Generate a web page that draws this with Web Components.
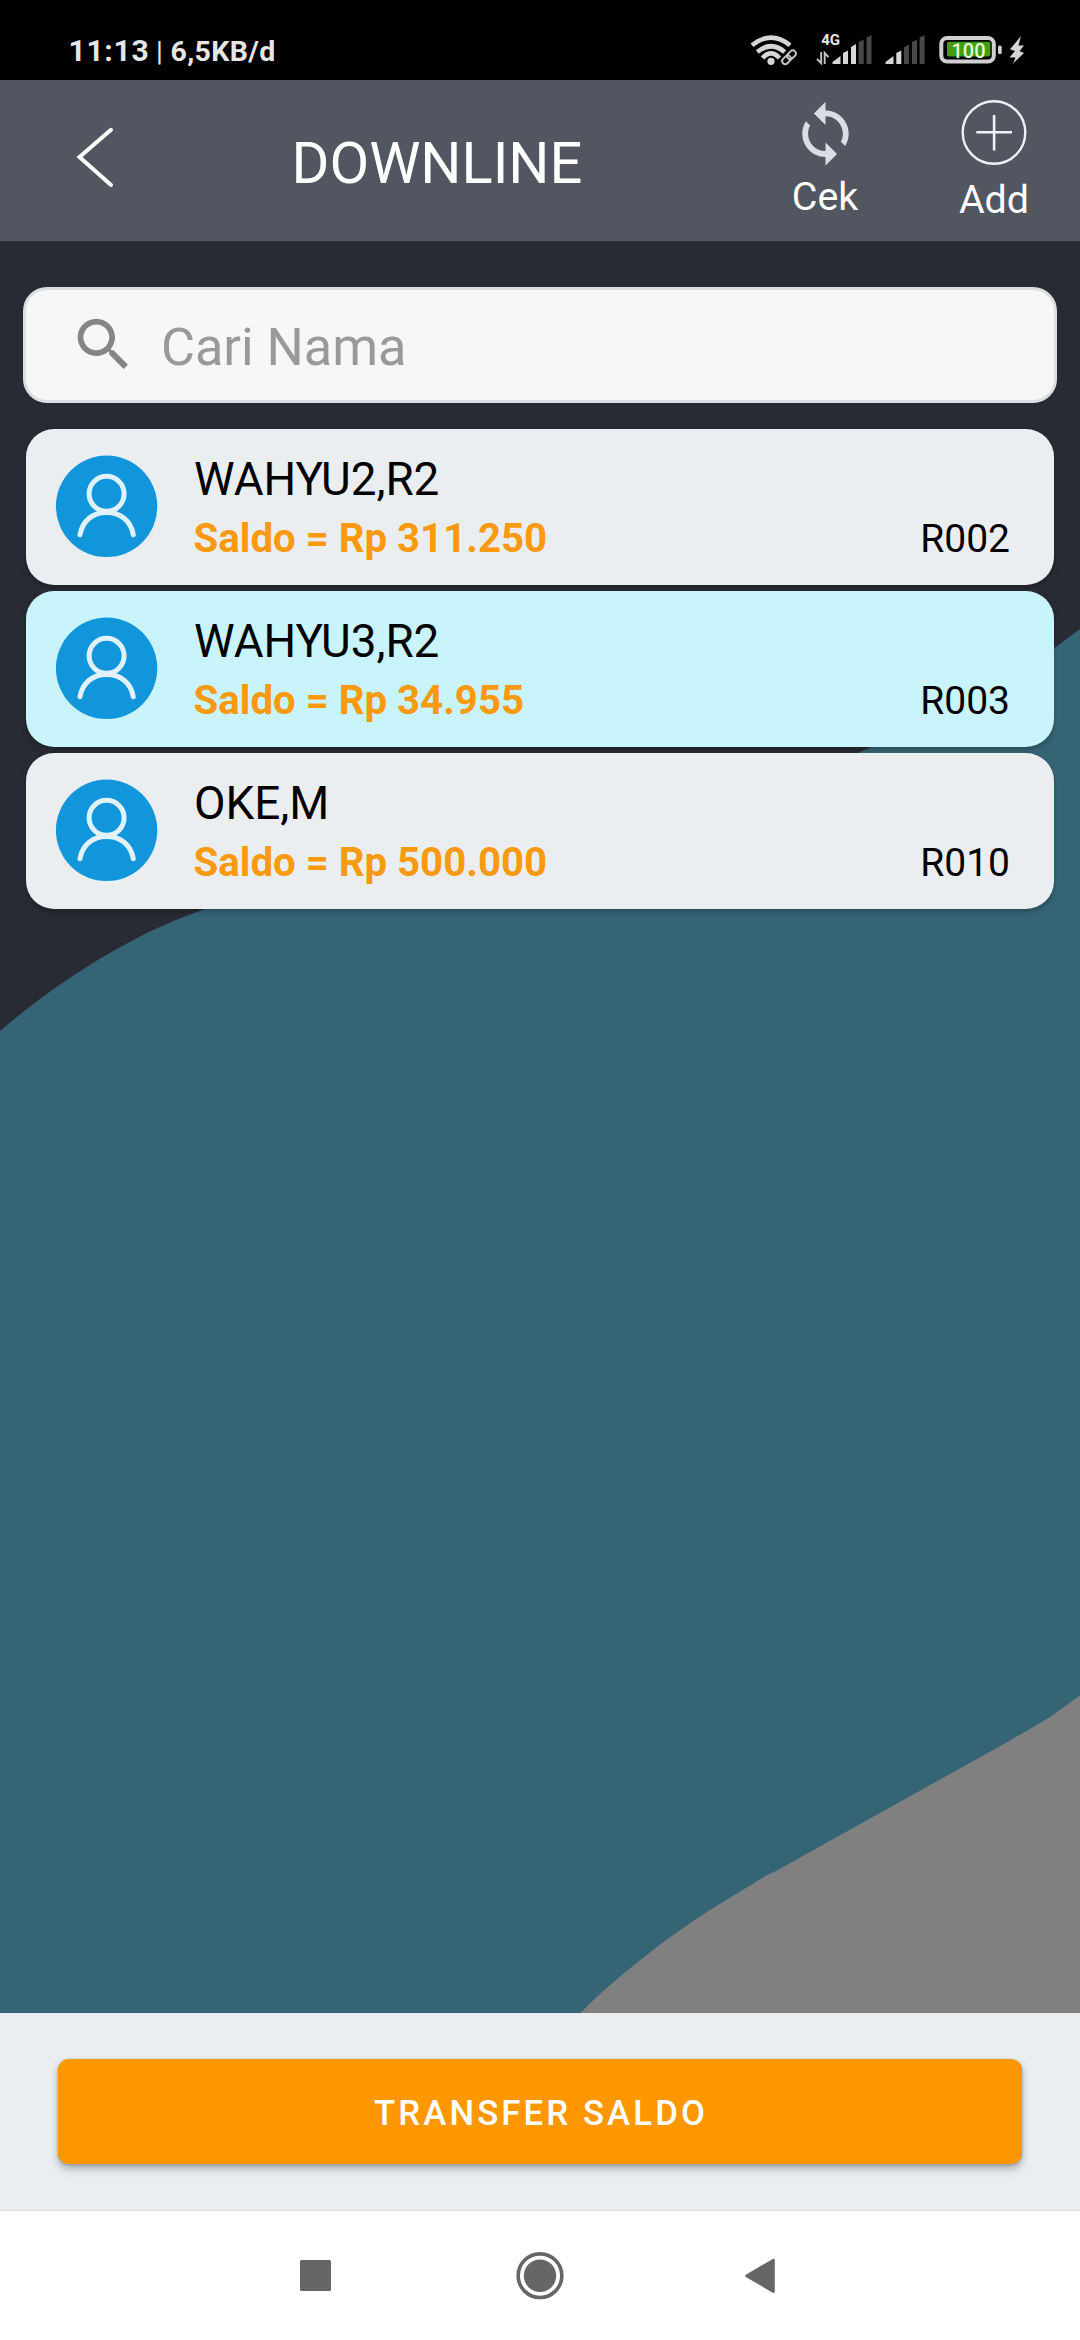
<!DOCTYPE html>
<html lang="id">
<head>
<meta charset="utf-8">
<title>Downline</title>
<style>
html,body{margin:0;padding:0}
body{width:1080px;height:2340px;overflow:hidden;font-family:Roboto,sans-serif;background:#000}
</style>
</head>
<body>
<downline-app></downline-app>
<script>
const define = (name, html) => {
  const tpl = document.createElement('template');
  tpl.innerHTML = html;
  customElements.define(name, class extends HTMLElement {
    constructor() {
      super();
      this.attachShadow({mode: 'open'}).append(tpl.content.cloneNode(true));
    }
  });
};

define('status-bar', `
<style>
:host{display:flex;height:80px;background:#000;color:#e6e6e6;box-sizing:border-box;padding:0 55px 0 68.500px;justify-content:space-between}
.left{display:flex;align-items:baseline;white-space:pre;line-height:36px;padding-top:33px;height:36px}
.clock{font-size:30px;font-weight:700;letter-spacing:.7px;width:87.500px}
.bar{font-size:28px;width:14.500px}
.rate{font-size:28.500px;font-weight:700;letter-spacing:.35px}
.right{display:flex;padding-top:28px}
svg{display:block;height:44px}
.wifi{width:48px;margin-right:18px}.sig{width:56px;margin-right:13px}.sig2{width:40px;margin-right:13px}.bat{width:64px;margin-right:6px}.bolt{width:17px}
text{font-family:Roboto,sans-serif}
</style>
<div class="left"><span class="clock">11:13</span><span class="bar">|</span><span class="rate">6,5KB/d</span></div>
<div class="right">
<svg class="wifi" viewBox="751 28 48 44"><g fill="none" stroke="#d6d6d6" stroke-width="4.600"><path d="M753 45.200Q772 30 791 45.200"/><path d="M758.300 52Q772 40.500 785.700 52"/><path d="M763.500 58Q772 48.800 780.500 58"/></g><circle cx="772" cy="61.300" r="3.600" fill="#d6d6d6"/><path d="M785 62.500L795 52" fill="none" stroke="#000" stroke-width="11" stroke-linecap="round"/><g fill="none" stroke="#c4c4c4" stroke-width="1.900" transform="rotate(-45 790 57.300)"><rect x="781.600" y="54.200" width="9.800" height="6.200" rx="3.100"/><rect x="788.600" y="54.200" width="9.800" height="6.200" rx="3.100"/></g></svg>
<svg class="sig" viewBox="817 28 56 44"><text x="822.200" y="45" font-size="15" font-weight="700" fill="#e6e6e6">4G</text><path d="M818 59l4.200 4.200V52M825.700 64V53l3.800 4.200" fill="none" stroke="#c4c4c4" stroke-width="1.900"/><g fill="#d6d6d6"><path d="M833.500 64v-2l8-6v8zM844 53l5-2.500V64h-5zM852 47l5-3V64h-5z"/></g><path d="M859.700 42l5-2.500V64h-5zM867.500 37.500l5-2.500V64h-5z" fill="#484848"/></svg>
<svg class="sig2" viewBox="885 28 40 44"><path d="M885.500 64v-2l8-6v8zM896.300 53l5-2.500V64h-5z" fill="#d6d6d6"/><path d="M904 47.500l5-3V64h-5zM912 42l5-2.500V64h-5zM919.600 37.500l5-2.500V64h-5z" fill="#484848"/></svg>
<svg class="bat" viewBox="938 28 64 44"><rect x="941.300" y="38" width="52.500" height="23.500" rx="6" fill="none" stroke="#d0d0d0" stroke-width="4"/><rect x="947" y="41.800" width="43.400" height="14.600" rx="2" fill="#3f9e12"/><text x="968.500" y="57.700" text-anchor="middle" font-size="20" font-weight="500" fill="#e2fbd2">100</text><rect x="998" y="45.500" width="3.700" height="8.500" rx="1.500" fill="#d0d0d0"/></svg>
<svg class="bolt" viewBox="1008 28 17 44"><path d="M1021 36L1010 49.300l5 1.700-5.500 6.500h6L1013 63.500 1024 53l-4.500-2 4.500-5.500h-5.500z" fill="#d6d6d6"/></svg>
</div>`);

define('tool-button', `
<style>
:host{display:flex;flex-direction:column;align-items:center;width:110px;font-size:39.400px;line-height:46px;color:#fff}
::slotted(svg){display:block;margin-bottom:2px}
</style>
<slot name="icon"></slot><slot></slot>`);

define('app-header', `
<style>
:host{display:flex;height:161px;background:#515661;color:#fff;box-sizing:border-box}
.back{display:block;width:40px;height:64px;margin:45px 0 0 75px}
h1{margin:47px 0 0 176.500px;font-size:57.750px;line-height:72px;font-weight:400;width:438.500px;letter-spacing:0}
.cek{margin-top:18px;margin-left:40px}
.add{margin-top:18px;margin-left:59px}
.add svg{margin-bottom:5px}
</style>
<svg class="back" viewBox="75 125 40 64"><path d="M111 129.800L79.500 157l31.500 28" fill="none" stroke="#fff" stroke-width="4" stroke-linecap="round"/></svg>
<h1>DOWNLINE</h1>
<tool-button class="cek"><svg slot="icon" width="69" height="74" viewBox="0.100 -.300 23.800 25.500" fill="#dcdde2"><path d="M12 4V1L8 5l4 4V6c3.310 0 6 2.690 6 6 0 1.010-.250 1.970-.700 2.800l1.460 1.460C19.540 15.030 20 13.570 20 12c0-4.420-3.580-8-8-8zm0 14c-3.310 0-6-2.690-6-6 0-1.010.250-1.970.700-2.800L5.240 7.740C4.460 8.970 4 10.430 4 12c0 4.420 3.580 8 8 8v3l4-4-4-4v3z"/></svg>Cek</tool-button>
<tool-button class="add"><svg slot="icon" width="70" height="74" viewBox="958.700 98 70 74" fill="none" stroke="#eef0f4"><circle cx="993.700" cy="132.500" r="31.300" stroke-width="2.400"/><path d="M976 132.300h35.700M993.800 115v35.500" stroke-width="2.600"/></svg>Add</tool-button>`);

define('search-field', `
<style>
:host{display:flex;align-items:center;height:116px;box-sizing:border-box;margin:0 23px;background:#f7f7f7;border:3px solid #dcdfe1;border-radius:24px;color:#999;font-size:52.250px;letter-spacing:-.05px;line-height:62px;padding-left:43px}
svg{width:69px;height:69px;margin-right:23px;margin-top:-1px;display:block}
span{padding-top:5px}
</style>
<svg viewBox="0 0 24 24" fill="#858585"><path d="M15.500 14h-.790l-.280-.270C15.410 12.590 16 11.110 16 9.500 16 5.910 13.090 3 9.500 3S3 5.910 3 9.500 5.910 16 9.500 16c1.610 0 3.090-.590 4.230-1.570l.270.280v.790l5 4.990L20.490 19l-4.990-5zm-6 0C7.010 14 5 11.990 5 9.500S7.010 5 9.500 5 14 7.010 14 9.500 11.990 14 9.500 14z"/></svg>
<span><slot></slot></span>`);

define('member-card', `
<style>
:host{display:flex;height:156px;box-sizing:border-box;background:#ebeef1;border-radius:28px;color:#000;padding-left:29px;box-shadow:0 3px 5px rgba(0,0,0,.25)}
:host([selected]){background:#c9f4fb}
svg{display:block;width:103px;height:103px;margin:26px 36px 0 0}
.info{flex:1;display:flex;flex-direction:column}
.name{font-size:45.800px;line-height:56px;margin-top:23px;height:56px}
.row{display:flex;align-items:baseline;justify-content:space-between;padding-right:44px;font-size:39px;line-height:46px;margin-top:8px}
.saldo{font-size:40.200px;font-weight:700;color:#fb990f;margin-left:-.500px}
</style>
<svg viewBox="55 455 103 103"><circle cx="106.600" cy="506.300" r="50.700" fill="#1296db"/><g fill="none" stroke="#e0f2fb" stroke-width="5" stroke-linecap="round"><circle cx="106.600" cy="493.800" r="17.500"/><path d="M80 534.800C82.500 520.500 93 512.500 106.600 512.500S130.800 520.500 133.300 534.800"/></g></svg>
<div class="info"><div class="name"><slot name="name"></slot></div><div class="row"><span class="saldo"><slot name="saldo"></slot></span><span><slot name="code"></slot></span></div></div>`);

define('transfer-bar', `
<style>
:host{display:flex;height:197px;box-sizing:border-box;background:#eaeef1;padding:46px 58px}
button{flex:1;height:105px;border:0;border-radius:11px;background:#ff9800;color:#fff;font:500 34.750px/44px Roboto,sans-serif;letter-spacing:3.100px;padding:3px 0 0 2px;box-shadow:0 5px 8px rgba(0,0,0,.27),0 1px 3px rgba(0,0,0,.2)}
</style>
<button><slot></slot></button>`);

define('nav-bar', `
<style>
:host{display:flex;height:130px;box-sizing:border-box;background:#fff;border-top:1px solid #dedfe0;padding:40px 300px 0 295px}
svg{display:block;height:50px}
.home{margin:0 175px 0 179px}
</style>
<svg width="41" viewBox="295 2251 41 50"><rect x="300" y="2260" width="31" height="31" rx="1.500" fill="#666"/></svg>
<svg class="home" width="50" viewBox="515 2251 50 50"><circle cx="540" cy="2275.700" r="21.800" fill="none" stroke="#666" stroke-width="3.600"/><circle cx="540" cy="2275.700" r="16.200" fill="#666"/></svg>
<svg width="40" viewBox="740 2251 40 50"><path d="M746.500 2275.800L773.500 2260v31.600z" fill="#666" stroke="#666" stroke-width="2.600" stroke-linejoin="round"/></svg>`);

define('downline-screen', `
<style>
:host{display:block;height:1772px;box-sizing:border-box;position:relative;background:#292b34}
.bg{position:absolute;left:0;top:0;width:1080px;height:1772px;display:block}
.content{position:relative;display:flex;flex-direction:column;padding-top:46px}
.list{display:flex;flex-direction:column;gap:6px;margin:26px 26px 0}
</style>
<svg class="bg" viewBox="0 241 1080 1772"><path d="M0 1031C50 988 115 945 176 920L207 908C420 815 700 820 858 752.700L870 747.700C935 722 1005 686 1054.300 648L1080 629V2013H0z" fill="#356575"/><path d="M1080 1695.500L1050 1717C1037 1725 1023 1733 1008 1741.700L774 1872L767 1875C748 1887 727 1899 708.700 1910.700C687 1925 664 1941 643.300 1957.700C620 1976 600 1993 580.500 2013H1080z" fill="#808080"/></svg>
<div class="content">
<search-field>Cari Nama</search-field>
<div class="list">
<member-card><span slot="name">WAHYU2,R2</span><span slot="saldo">Saldo = Rp 311.250</span><span slot="code">R002</span></member-card>
<member-card selected><span slot="name">WAHYU3,R2</span><span slot="saldo">Saldo = Rp 34.955</span><span slot="code">R003</span></member-card>
<member-card><span slot="name">OKE,M</span><span slot="saldo">Saldo = Rp 500.000</span><span slot="code">R010</span></member-card>
</div></div>`);

define('downline-app', `
<style>:host{display:flex;flex-direction:column;width:1080px;height:2340px}</style>
<status-bar></status-bar><app-header></app-header><downline-screen></downline-screen><transfer-bar>TRANSFER SALDO</transfer-bar><nav-bar></nav-bar>`);
</script>
</body>
</html>
